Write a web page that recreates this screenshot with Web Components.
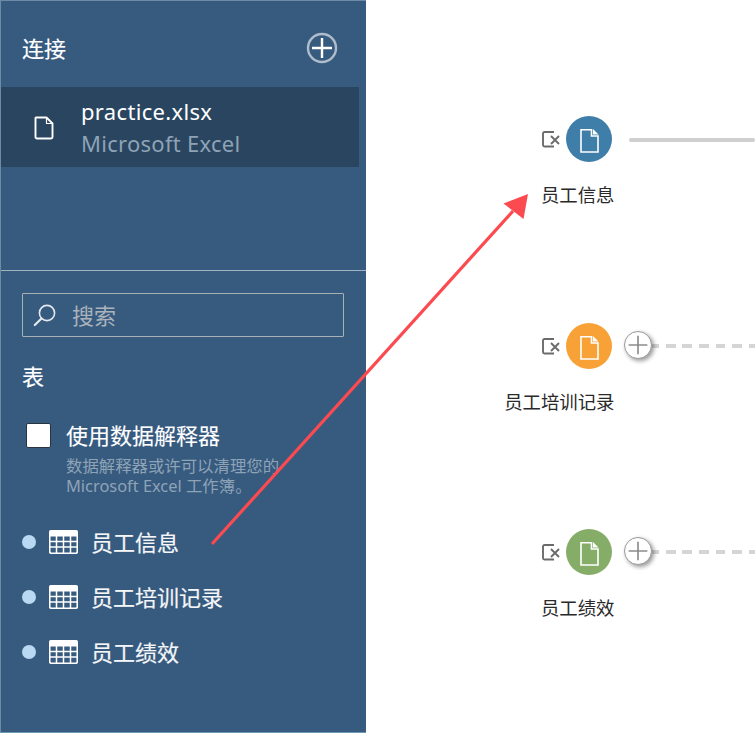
<!DOCTYPE html>
<html lang="zh"><head><meta charset="utf-8">
<style>
html,body{margin:0;padding:0;background:#fff;width:755px;height:733px;overflow:hidden;font-family:"Noto Sans","Noto Sans CJK SC",sans-serif}
</style></head><body>
<app-shell></app-shell>
<script>
const FONT='"Noto Sans","Noto Sans CJK SC",sans-serif';
function def(name,css,html){
  customElements.define(name,class extends HTMLElement{
    connectedCallback(){
      if(this.shadowRoot)return;
      const r=this.attachShadow({mode:'open'});
      const g=k=>this.getAttribute(k)||'';
      r.innerHTML='<style>'+css+'</style>'+(typeof html==='function'?html(g):html);
    }
  });
}
const docIcon='<svg width="20" height="24" viewBox="0 0 20 24" fill="none" stroke="#fff" stroke-width="1.9" stroke-linejoin="round"><path d="M2 1.5H12.5L18.5 7.5V21a1.5 1.5 0 0 1-1.5 1.5H3A1.5 1.5 0 0 1 1.5 21V2z"/><path d="M12.5 1.5V7.5H18.5" stroke-width="1.2"/></svg>';
def('conn-card',`:host{display:flex;align-items:center;height:80px;width:358px;background:#294560;box-sizing:border-box;padding-left:33px}
.i{width:20px;height:24px;display:block;margin-top:1px}
.t{margin-left:27px;display:flex;flex-direction:column}
.a{font-size:22px;line-height:32px;color:#fff;letter-spacing:.33px}
.b{font-size:22px;line-height:32px;color:#8ea3b6;letter-spacing:.28px}`,
g=>`<div class="i">${docIcon}</div><div class="t"><div class="a">${g('name')}</div><div class="b">${g('kind')}</div></div>`);
def('search-box',`:host{display:flex;align-items:center;box-sizing:border-box;width:322px;height:44px;border:1px solid #a9b0b6;border-radius:1px;padding-left:10px;color:#aab2ba;font-size:22px}
svg{display:block;flex:none}span{margin-left:15px;line-height:44px;margin-top:-1px}`,
g=>`<svg width="24" height="24" viewBox="0 0 24 24" fill="none" stroke="#e4e9ee"><circle cx="14" cy="10" r="7.6" stroke-width="1.6"/><path d="M8.5 15.5L1.8 22" stroke-width="2.2" stroke-linecap="round"/></svg><span>${g('placeholder')}</span>`);
def('table-row',`:host{display:flex;align-items:center;height:55px;color:#f4f6f8;font-size:22px}
.dot{width:14px;height:14px;border-radius:50%;background:#b9d8f2;flex:none;margin-top:-2px}
svg{display:block;flex:none;margin-left:13px;margin-top:-1px}
.lb{margin-left:13px;line-height:30px;margin-top:-2px;-webkit-text-stroke:.2px #f4f6f8}`,
g=>`<span class="dot"></span><svg width="29" height="24" viewBox="0 0 29 24"><rect x="0.75" y="0.75" width="27.5" height="22.5" rx="1.5" fill="none" stroke="#fff" stroke-width="1.6"/><rect x="1" y="1" width="27" height="5.5" fill="#fff"/><path d="M1 11.5H28M1 17H28M7.5 6V23M14.5 6V23M21.5 6V23" stroke="#fff" stroke-width="1.5" fill="none"/></svg><span class="lb">${g('label')}</span>`);
def('side-bar',`:host{display:flex;flex-direction:column;flex:none;width:366px;height:733px;box-sizing:border-box;background:#375a7f;border-top:1px solid #6f8aa5;border-left:1px solid #6f8aa5;border-bottom:1px solid #6f9ab5;color:#fff;overflow:hidden}
.head{display:flex;justify-content:space-between;align-items:center;height:86px;padding:8px 28px 0 21px;box-sizing:border-box;font-size:22px}
.head span{margin-top:-3px;-webkit-text-stroke:.15px #fff}
.top{height:269px;flex:none}
.rule{height:1px;background:#a3b2c1;flex:none}
.low{padding:22px 0 0 21px;display:flex;flex-direction:column}
.tb{font-size:22px;line-height:30px;margin-top:24px;-webkit-text-stroke:.15px #fff}
.chk{display:flex;margin-top:31px;margin-left:4px}
.box{width:25px;height:25px;background:#fff;border:1px solid #2a3440;border-radius:2px;box-sizing:border-box;flex:none;margin-top:1px}
.ct{margin-left:15px}
.l1{font-size:22px;line-height:28px;margin-top:-1px;-webkit-text-stroke:.12px #fff}
.l2{font-size:16.4px;line-height:20px;color:#8ea3b6;margin-top:7px;width:225px}
.rows{margin-top:19px}`,
`<div class="top"><div class="head"><span>连接</span><svg width="32" height="32" viewBox="0 0 32 32" fill="none"><circle cx="16" cy="16" r="14" stroke="#aebccb" stroke-width="2.4"/><path d="M16 6V26M6 16H26" stroke="#fff" stroke-width="2.4"/></svg></div><conn-card name="practice.xlsx" kind="Microsoft Excel"></conn-card></div>
<div class="rule"></div>
<div class="low"><search-box placeholder="搜索"></search-box><div class="tb">表</div>
<div class="chk"><div class="box"></div><div class="ct"><div class="l1">使用数据解释器</div><div class="l2">数据解释器或许可以清理您的 Microsoft Excel 工作簿。</div></div></div>
<div class="rows"><table-row label="员工信息"></table-row><table-row label="员工培训记录"></table-row><table-row label="员工绩效"></table-row></div></div>`);
def('flow-node',`:host{display:block;height:206px;width:389px;flex:none}
:host([first]){height:207px}
.r{display:flex;align-items:center;height:46px;padding-left:175px}
.x{display:block;flex:none;width:20px;height:20px;margin-right:5px}
.c{width:46px;height:46px;border-radius:50%;display:flex;align-items:center;justify-content:center;flex:none;background:var(--c)}
.c svg{margin-top:2px}
.plus{width:28px;height:28px;box-sizing:border-box;border:1.5px solid #9a9a9a;border-radius:50%;background:#fff;box-shadow:2px 2px 4px rgba(0,0,0,.4);margin-left:12px;margin-top:-3px;flex:none;display:block;position:relative;z-index:1}
.line{height:4px;flex:1;margin-left:17px;background:#cfcfcf;border-radius:2px;margin-top:2px}
.dash{height:4px;flex:1;background:repeating-linear-gradient(90deg,#d5d5d5 0 7px,transparent 7px 13.7px,#d5d5d5 13.7px 16.6px);margin-top:-1px}
.lb{font-size:18.4px;line-height:26px;color:#2a2a2a;width:248.5px;text-align:right;margin-top:20px;white-space:nowrap}`,
g=>`<div class="r"><svg class="x" viewBox="0 0 20 20" fill="none"><path d="M13 3H3.5A1.5 1.5 0 0 0 2 4.5V16A1.5 1.5 0 0 0 3.5 17.5H13" stroke="#6b6b6b" stroke-width="1.9"/><path d="M10 7L18 15M18 7L10 15" stroke="#6b6b6b" stroke-width="1.9"/></svg><div class="c" style="--c:${g('color')}"><svg width="19" height="25" viewBox="0 0 19 25" fill="none" stroke="#fff"><path d="M1 1.8V24H18V8H11.5V1.8Z" stroke-width="1.6"/><path d="M13 1L18.5 6.5H13Z" fill="#fff" stroke="none"/></svg></div>${g('mode')==='plus'?`<svg class="plus" viewBox="0 0 25 25" fill="none"><path d="M12.5 3.5V21.5M3.5 12.5H21.5" stroke="#8c8c8c" stroke-width="1.6"/></svg><div class="dash"></div>`:`<div class="line"></div>`}</div><div class="lb">${g('label')}</div>`);
def('flow-canvas',`:host{display:flex;flex-direction:column;flex:none;width:389px;height:733px;padding-top:116px;box-sizing:border-box;overflow:hidden;background:#fff}`,
`<flow-node first color="#3f7ea8" label="员工信息"></flow-node><flow-node color="#f8a136" mode="plus" label="员工培训记录"></flow-node><flow-node color="#86ad68" mode="plus" label="员工绩效"></flow-node>`);
def('app-shell',`:host{display:flex;position:relative;width:755px;height:733px;font-family:${FONT}}
svg.arrow{position:absolute;left:0;top:0;pointer-events:none}`,
`<side-bar></side-bar><flow-canvas></flow-canvas>
<svg class="arrow" width="755" height="733" viewBox="0 0 755 733"><path d="M212 544L513 211" stroke="#fb4a50" stroke-width="3.2" fill="none"/><path d="M528 194L503.5 203.5L523.5 219Z" fill="#fb4a50"/></svg>`);
</script>
</body></html>
